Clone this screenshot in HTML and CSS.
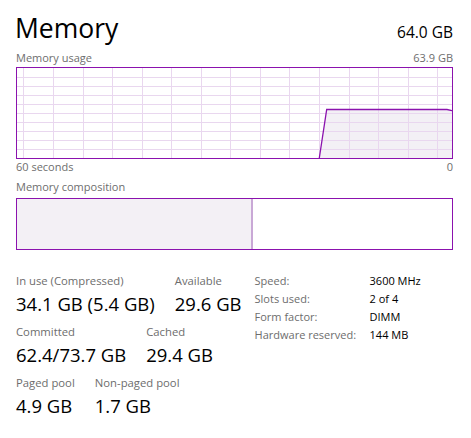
FILE: index.html
```html
<!DOCTYPE html>
<html>
<head>
<meta charset="utf-8">
<link rel="stylesheet" href="styles.css">
</head>
<body>
<div class="panel">
  <div class="title-row">
    <div class="title">Memory</div>
    <div class="total">64.0 GB</div>
  </div>
  <div class="cap-row top">
    <span>Memory usage</span>
    <span>63.9 GB</span>
  </div>
  <div class="graph">
    <svg width="435" height="90" viewBox="0 0 435 90">
      <polygon points="302.3,90 309.7,41.5 430,41.5 435,42.7 435,90" fill="#f3f0f5"/>
      <g stroke="#e9d7ef" stroke-width="1">
        <line x1="0" y1="9.5" x2="435" y2="9.5"/>
        <line x1="0" y1="18.5" x2="435" y2="18.5"/>
        <line x1="0" y1="27.5" x2="435" y2="27.5"/>
        <line x1="0" y1="36.5" x2="435" y2="36.5"/>
        <line x1="0" y1="45.5" x2="435" y2="45.5"/>
        <line x1="0" y1="54.5" x2="435" y2="54.5"/>
        <line x1="0" y1="63.5" x2="435" y2="63.5"/>
        <line x1="0" y1="72.5" x2="435" y2="72.5"/>
        <line x1="0" y1="81.5" x2="435" y2="81.5"/>
        <line x1="6.5" y1="0" x2="6.5" y2="90"/>
        <line x1="36.5" y1="0" x2="36.5" y2="90"/>
        <line x1="66.5" y1="0" x2="66.5" y2="90"/>
        <line x1="95.5" y1="0" x2="95.5" y2="90"/>
        <line x1="125.5" y1="0" x2="125.5" y2="90"/>
        <line x1="154.5" y1="0" x2="154.5" y2="90"/>
        <line x1="184.5" y1="0" x2="184.5" y2="90"/>
        <line x1="213.5" y1="0" x2="213.5" y2="90"/>
        <line x1="243.5" y1="0" x2="243.5" y2="90"/>
        <line x1="272.5" y1="0" x2="272.5" y2="90"/>
        <line x1="302.5" y1="0" x2="302.5" y2="90"/>
        <line x1="332.5" y1="0" x2="332.5" y2="90"/>
        <line x1="361.5" y1="0" x2="361.5" y2="90"/>
        <line x1="391.5" y1="0" x2="391.5" y2="90"/>
        <line x1="420.5" y1="0" x2="420.5" y2="90"/>
      </g>
      <polyline points="302.3,90 309.7,41.5 430,41.5 435,42.7" fill="none" stroke="#8b12ae" stroke-width="1.3"/>
    </svg>
  </div>
  <div class="cap-row bottom">
    <span>60 seconds</span>
    <span>0</span>
  </div>
  <div class="cap-row comp-cap">
    <span>Memory composition</span>
  </div>
  <div class="composition">
    <div class="comp-used"></div>
    <div class="comp-divider"></div>
    <div class="comp-free"></div>
  </div>
  <div class="stats">
    <div class="stats-left">
      <div class="stat-row">
        <div class="stat"><div class="label">In use (Compressed)</div><div class="value">34.1 GB (5.4 GB)</div></div>
        <div class="stat"><div class="label">Available</div><div class="value">29.6 GB</div></div>
      </div>
      <div class="stat-row">
        <div class="stat"><div class="label">Committed</div><div class="value">62.4/73.7 GB</div></div>
        <div class="stat"><div class="label">Cached</div><div class="value">29.4 GB</div></div>
      </div>
      <div class="stat-row">
        <div class="stat"><div class="label">Paged pool</div><div class="value">4.9 GB</div></div>
        <div class="stat"><div class="label">Non-paged pool</div><div class="value">1.7 GB</div></div>
      </div>
    </div>
    <div class="details">
      <div class="dl">Speed:</div><div class="dv">3600 MHz</div>
      <div class="dl">Slots used:</div><div class="dv">2 of 4</div>
      <div class="dl">Form factor:</div><div class="dv">DIMM</div>
      <div class="dl">Hardware reserved:</div><div class="dv">144 MB</div>
    </div>
  </div>
</div>
</body>
</html>
```
FILE: styles.css
```css
html, body {
  margin: 0;
  padding: 0;
  background: #ffffff;
}
body {
  font-family: "Segoe UI", "Open Sans", "Noto Sans", sans-serif;
  color: #000000;
}
.panel {
  width: 437px;
  padding: 0 19px 0 16px;
}
.title-row {
  display: flex;
  justify-content: space-between;
  align-items: baseline;
  height: 50px;
  padding-top: 10px;
  box-sizing: border-box;
}
.title {
  font-size: 26.5px;
  line-height: 36px;
  margin-left: -1px;
}
.total {
  font-size: 15.5px;
  line-height: 20px;
}
.cap-row {
  display: flex;
  justify-content: space-between;
  font-size: 11px;
  line-height: 16px;
  color: #6e6e6e;
}
.cap-row.top {
  height: 17px;
}
.graph {
  width: 435px;
  height: 90px;
  border: 1px solid #8b12ae;
}
.graph svg {
  display: block;
}
.cap-row.bottom {
  height: 20px;
}
.cap-row.comp-cap {
  height: 19px;
}
.composition {
  display: flex;
  width: 435px;
  height: 50px;
  border: 1px solid #8b12ae;
}
.comp-used {
  width: 234px;
  background: #f3f0f5;
}
.comp-divider {
  width: 2px;
  background: #c9a8d6;
}
.comp-free {
  flex: 1;
  background: #ffffff;
}
.stats {
  display: flex;
  gap: 13px;
  margin-top: 23px;
}
.stats-left {
  display: flex;
  flex-direction: column;
  gap: 8px;
}
.stat-row {
  display: flex;
  gap: 20px;
}
.label {
  font-size: 11.3px;
  line-height: 16px;
  color: #6d6d6d;
}
.value {
  font-size: 18.5px;
  line-height: 24px;
  margin-top: 3px;
}
.details {
  display: grid;
  grid-template-columns: 115px auto;
  grid-auto-rows: 18px;
  font-size: 11px;
  line-height: 16px;
  align-content: start;
}
.dl {
  color: #6d6d6d;
}
.dv {
  color: #000000;
}
```
